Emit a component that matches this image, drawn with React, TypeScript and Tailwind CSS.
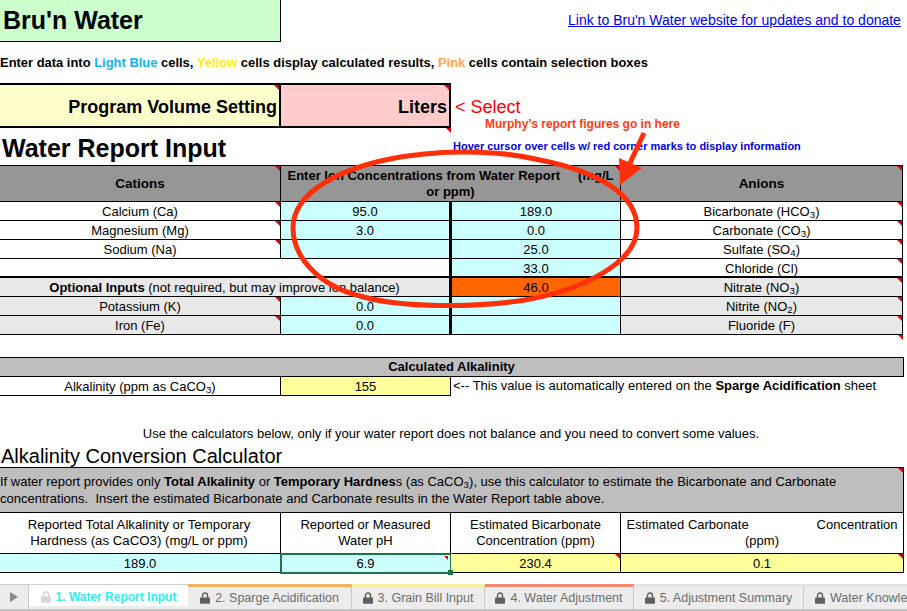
import React from 'react';

const Corner = ({ size = 5 }: { size?: number }) => (
  <span
    className="absolute top-0 right-0 w-0 h-0 border-t-[#d8000c] border-l-transparent border-solid"
    style={{ borderTopWidth: size, borderLeftWidth: size }}
  />
);

const Cell = ({
  children,
  className = '',
  mark = false,
}: {
  children?: React.ReactNode;
  className?: string;
  mark?: boolean;
}) => (
  <div className={`relative flex items-center justify-center border-r border-b border-black leading-none ${className}`}>
    {children}
    {mark && <Corner />}
  </div>
);

const Row = ({ children, className = '' }: { children: React.ReactNode; className?: string }) => (
  <div className={`grid grid-cols-[281px_171px_169px_282px] w-[903px] h-[19px] ${className}`}>{children}</div>
);

const blue = 'bg-[#ccffff]';
const gray = 'bg-[#e8e8e8]';
const thickR = 'border-r-[3px]';

const Lock = ({ className = '' }: { className?: string }) => (
  <svg viewBox="0 0 12 14" className={`w-[10px] h-[12px] ${className}`} fill="currentColor">
    <path d="M1 6.5h10a1 1 0 0 1 1 1V13a1 1 0 0 1-1 1H1a1 1 0 0 1-1-1V7.5a1 1 0 0 1 1-1z" />
    <path d="M3 7V4a3 3 0 0 1 6 0v3" fill="none" stroke="currentColor" strokeWidth="1.7" />
  </svg>
);

const Tab = ({ label, top, width, className = 'justify-center' }: { label: string; top: string; width: string; className?: string }) => (
  <div className={`flex items-center gap-[5px] h-full border-t-[3px] border-r border-r-[#c9c9c9] ${top} ${width} ${className} text-[#6d6d6d] whitespace-nowrap shrink-0`}>
    <Lock className="text-[#5f5f5f]" />
    <span>{label}</span>
  </div>
);

export default function App() {
  return (
    <div className="relative w-[907px] h-[611px] overflow-hidden bg-white text-black font-['Liberation_Sans',Arial,sans-serif] text-[13px]">
      {/* title row */}
      <div className="flex h-[42px]">
        <div className="w-[281px] bg-[#ccffcc] border-r border-b border-black flex items-center pl-[3px] text-[25px] font-bold">
          Bru'n Water
        </div>
        <a className="ml-[287px] mt-[12px] text-[14px] leading-4 text-[#0000ee] underline whitespace-nowrap">
          Link to Bru'n Water website for updates and to donate
        </a>
      </div>

      <div className="h-[41px] flex items-center font-bold text-[12.95px] whitespace-pre">
        Enter data into <span className="text-[#16b0f5]">Light Blue</span> cells,{' '}
        <span className="text-[#ffee00]">Yellow</span> cells display calculated results,{' '}
        <span className="text-[#ffa64d]">Pink</span> cells contain selection boxes
      </div>

      {/* volume setting */}
      <div className="flex h-[45px]">
        <div className="relative w-[281px] bg-[#ffffcc] border-y-2 border-r-2 border-black flex items-center justify-end pr-[2px] pt-[3px] text-[18px] font-bold">
          Program Volume Setting
          <Corner />
        </div>
        <div className="relative w-[170px] bg-[#ffcccc] border-y-2 border-r-2 border-black flex items-center justify-end pr-[2px] pt-[3px] text-[18px] font-bold">
          Liters
          <Corner />
        </div>
        <div className="ml-[4px] text-[18px] leading-[48px] text-[#ff0000]">&lt; Select</div>
      </div>

      {/* section heading */}
      <div className="relative flex items-center h-[37px]">
        <div className="pl-[2px] pt-[3px] w-[453px] text-[25px] font-bold leading-none">Water Report Input</div>
        <div className="text-[11px] font-bold text-[#0000e0] whitespace-nowrap">
          Hover cursor over cells w/ red corner marks to display information
        </div>
        <span className="absolute left-[446px] top-0 w-[5px] h-[5px]"><Corner /></span>
      </div>

      {/* report table */}
      <div className="grid grid-cols-[281px_340px_282px] w-[903px] h-[37px] border-t border-black">
        <Cell className="bg-[#969696] font-bold text-[13.5px]" mark>Cations</Cell>
        <Cell className="bg-[#969696] font-bold text-[13px] flex-col">
          <span className="w-[326px] flex justify-between leading-[16px]">
            <span>Enter Ion Concentrations from Water Report</span>
            <span>(mg/L</span>
          </span>
          <span className="leading-[16px]">or ppm)</span>
          <Corner />
        </Cell>
        <Cell className="bg-[#969696] font-bold text-[13.5px]" mark>Anions</Cell>
      </div>
      <Row>
        <Cell mark>Calcium (Ca)</Cell>
        <Cell className={`${blue} ${thickR}`}>95.0</Cell>
        <Cell className={blue}>189.0</Cell>
        <Cell mark><span>Bicarbonate (HCO<sub>3</sub>)</span></Cell>
      </Row>
      <Row>
        <Cell mark>Magnesium (Mg)</Cell>
        <Cell className={`${blue} ${thickR}`}>3.0</Cell>
        <Cell className={blue}>0.0</Cell>
        <Cell mark><span>Carbonate (CO<sub>3</sub>)</span></Cell>
      </Row>
      <Row>
        <Cell mark>Sodium (Na)</Cell>
        <Cell className={`${blue} ${thickR}`} />
        <Cell className={blue}>25.0</Cell>
        <Cell mark><span>Sulfate (SO<sub>4</sub>)</span></Cell>
      </Row>
      <Row className="border-b-2 border-black">
        <Cell className="border-b-0 border-r-0" />
        <Cell className={`border-b-0 ${thickR}`} />
        <Cell className={`${blue} border-b-0 pt-[1px]`}>33.0</Cell>
        <Cell className="border-b-0 pt-[1px]" mark>Chloride (Cl)</Cell>
      </Row>
      <Row>
        <div className={`col-span-2 flex items-center justify-center ${gray} border-b ${thickR} border-black leading-none`}>
          <span><b>Optional Inputs</b> (not required, but may improve ion balance)</span>
        </div>
        <Cell className="bg-[#ff6600]">46.0</Cell>
        <Cell className={gray} mark><span>Nitrate (NO<sub>3</sub>)</span></Cell>
      </Row>
      <Row>
        <Cell className={gray} mark>Potassium (K)</Cell>
        <Cell className={`${blue} ${thickR}`}>0.0</Cell>
        <Cell className={blue} />
        <Cell className={gray} mark><span>Nitrite (NO<sub>2</sub>)</span></Cell>
      </Row>
      <Row>
        <Cell className={gray} mark>Iron (Fe)</Cell>
        <Cell className={`${blue} ${thickR}`}>0.0</Cell>
        <Cell className={blue} />
        <Cell className={gray} mark>Fluoride (F)</Cell>
      </Row>

      {/* alkalinity */}
      <div className="relative h-[22px] w-[903px]"><Corner /></div>
      <div className="w-[904px] h-[20px] bg-[#bebebe] border border-l-0 border-black flex items-center justify-center pb-[1px] font-bold text-[13px] leading-none">
        Calculated Alkalinity
      </div>
      <div className="flex h-[19px] w-[907px]">
        <Cell className="w-[281px]">
          <span>Alkalinity (ppm as CaCO<sub>3</sub>)</span>
        </Cell>
        <Cell className="w-[170px] bg-[#ffff99]">155</Cell>
        <div className="pl-[2px] whitespace-nowrap leading-[18px]">
          &lt;-- This value is automatically entered on the <b>Sparge Acidification</b> sheet
        </div>
      </div>

      <div className="mt-[28px] h-[19px] text-center w-[902px] leading-[19px] text-[13px]">
        Use the calculators below, only if your water report does not balance and you need to convert some values.
      </div>
      <div className="h-[24px] pl-[1px] text-[20px] leading-[26px] whitespace-nowrap">Alkalinity Conversion Calculator</div>

      {/* calculator */}
      <div className="relative w-[904px] h-[46px] bg-[#bebebe] border border-l-0 border-black leading-[17px] pt-[5px] whitespace-pre">
        If water report provides only <b>Total Alkalinity</b> or <b>Temporary Hardnes</b>s (as CaCO<sub>3</sub>), use this calculator to estimate the Bicarbonate and Carbonate{'\n'}concentrations.  Insert the estimated Bicarbonate and Carbonate results in the Water Report table above.
        <Corner />
      </div>
      <div className="grid grid-cols-[281px_170px_170px_283px] w-[904px] h-[41px]">
        <Cell><div className="leading-[16px] text-center pb-[1px] pr-[2px] text-[13.25px]">Reported Total Alkalinity or Temporary<br />Hardness (as CaCO3) (mg/L or ppm)</div></Cell>
        <Cell><div className="leading-[16px] text-center pb-[1px]">Reported or Measured<br />Water pH</div></Cell>
        <Cell><div className="leading-[16px] text-center pb-[1px]">Estimated Bicarbonate<br />Concentration (ppm)</div></Cell>
        <Cell>
          <div className="leading-[16px] text-center pb-[1px]">
            <div className="w-[271px] flex justify-between"><span>Estimated Carbonate</span><span>Concentration</span></div>
            <div>(ppm)</div>
          </div>
        </Cell>
      </div>
      <div className="grid grid-cols-[281px_170px_170px_283px] w-[904px] h-[19px]">
        <Cell className={blue}>189.0</Cell>
        <Cell className={`${blue} outline-2 outline-[#217346] -outline-offset-1`}>
          6.9
          <span className="absolute top-[2px] right-[2px] w-0 h-0 border-solid border-t-[4px] border-l-[4px] border-t-[#d8000c] border-l-transparent" />
          <span className="absolute -right-[3px] -bottom-[3px] w-[5px] h-[5px] bg-[#217346] z-10" />
        </Cell>
        <Cell className="bg-[#ffff99]" mark>230.4</Cell>
        <Cell className="bg-[#ffff99]" mark>0.1</Cell>
      </div>

      {/* sheet tabs */}
      <div className="mt-[11px] flex h-[27px] bg-[#ececec] border-b-2 border-[#c4c4c4] text-[12.5px] overflow-hidden">
        <div className="w-[29px] shrink-0 flex items-center justify-center border-t border-t-[#cfcfcf] border-r border-[#c9c9c9]">
          <span className="w-0 h-0 border-solid border-y-[5px] border-l-[8px] border-y-transparent border-l-[#8a8a8a]" />
        </div>
        <div className="w-[159px] h-[22px] shrink-0 flex flex-col bg-white border-t border-t-[#cfcfcf]">
          <div className="flex-1 flex items-center justify-center gap-[5px] pt-[3px] text-[#2af0f0] text-[12px] font-bold whitespace-nowrap">
            <Lock className="text-[#d6d6d6]" />
            <span>1. Water Report Input</span>
          </div>
          <div className="h-[3px] bg-gradient-to-r from-white from-[8%] to-[#2af0f0] to-[35%]" />
        </div>
        <Tab label="2. Sparge Acidification" top="border-t-[#f0b060]" width="w-[164px]" />
        <Tab label="3. Grain Bill Input" top="border-t-[#f5f0a0]" width="w-[133px]" />
        <Tab label="4. Water Adjustment" top="border-t-[#f58a70]" width="w-[149px]" />
        <Tab label="5. Adjustment Summary" top="border-t-[#e4e4e4]" width="w-[170px]" />
        <Tab label="Water Knowledge" top="border-t-[#e4e4e4]" width="w-[130px]" className="pl-[11px]" />
      </div>

      {/* annotations drawn over the sheet */}
      <div className="absolute left-[485px] top-[117px] text-[12px] leading-[14px] font-bold text-[#ff3b14] whitespace-nowrap">
        Murphy’s report figures go in here
      </div>
      <svg className="absolute inset-0 pointer-events-none" width="907" height="611" viewBox="0 0 907 611">
        <path
          d="M293 228 C293 190 345 168 390 159 C430 151 490 148 540 160 C600 172 637 195 637 228 C637 264 578 291 525 300 C475 308 400 308 360 296 C320 286 293 258 293 228 Z"
          fill="none"
          stroke="#ff2f0a"
          strokeWidth="5"
        />
        <path d="M644 133 L630 163" stroke="#ff2f0a" strokeWidth="5" fill="none" />
        <path d="M620 185 L619 158 L642 168 Z" fill="#ff2f0a" />
      </svg>
    </div>
  );
}
